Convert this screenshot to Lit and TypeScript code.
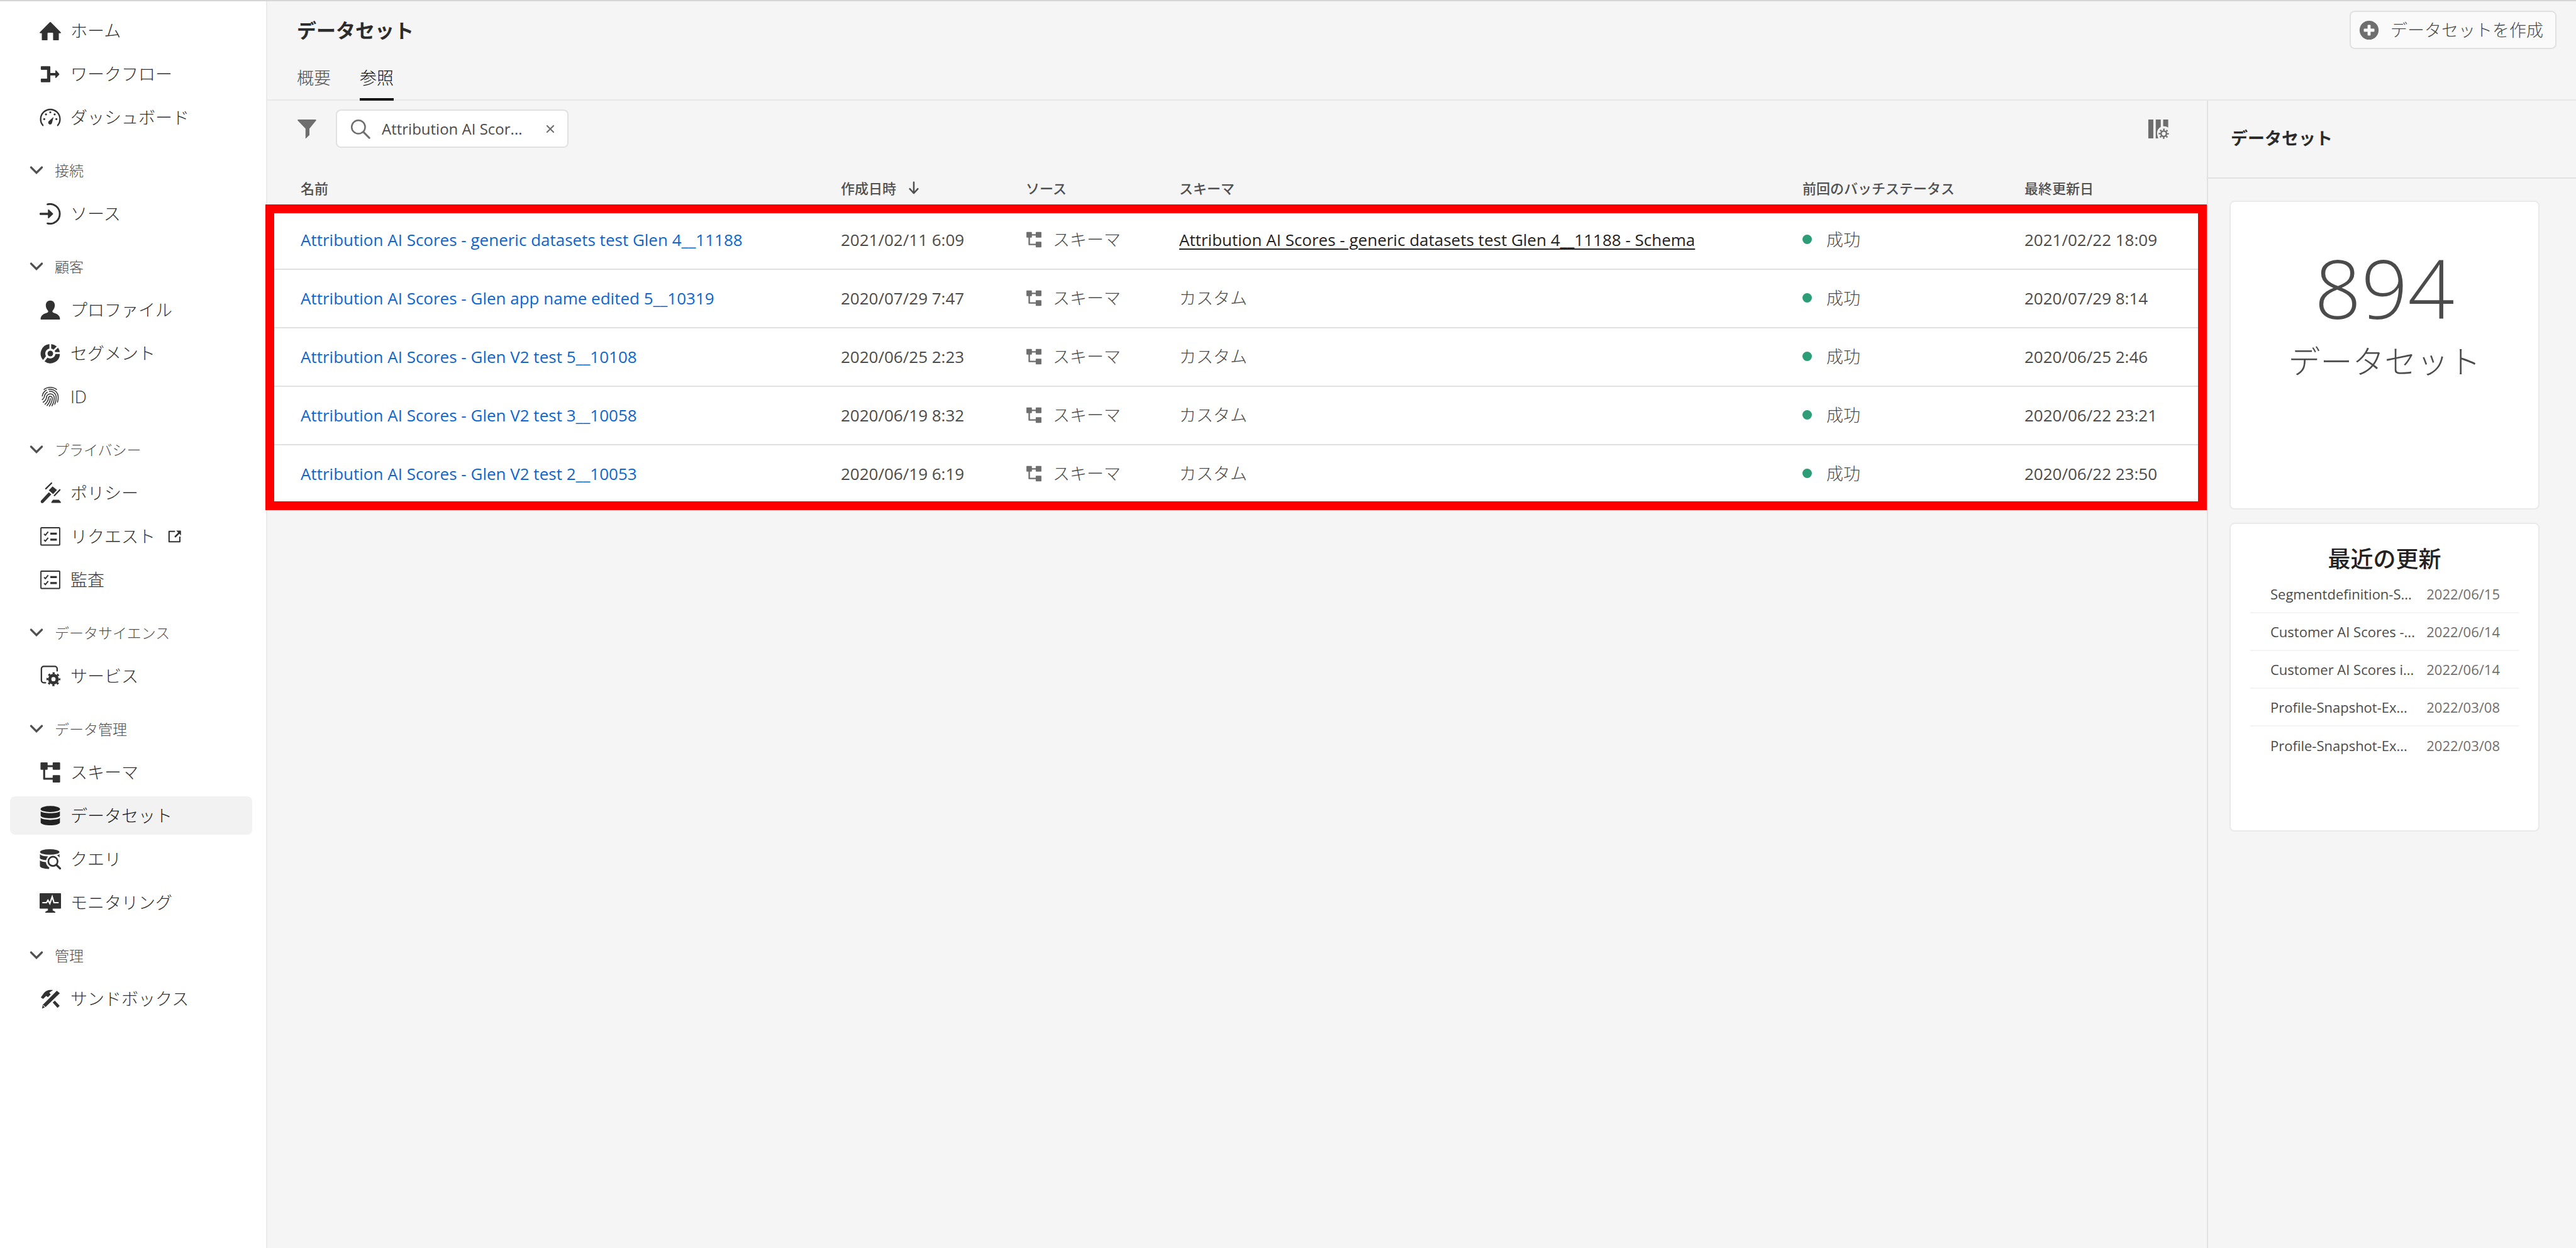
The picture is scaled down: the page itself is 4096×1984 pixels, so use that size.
import { LitElement, html, css, svg, nothing, type SVGTemplateResult } from "lit";
import { customElement, state } from "lit/decorators.js";
import { classMap } from "lit/directives/class-map.js";

/* Icon artwork, drawn on a 36-unit square. */
const ICONS: Record<string, SVGTemplateResult> = {
  home: svg`<path d="M17.2 3.5a1.2 1.2 0 0 1 1.6 0L35.6 20.400c.6.6.2 1.600-.7 1.600H32.300V33c0 .6-.4 1-1 1H23.700c-.6 0-1-.4-1-1V22.300c0-.6-.4-1-1-1h-7.400c-.6 0-1 .4-1 1V33c0 .6-.4 1-1 1H4.700c-.6 0-1-.4-1-1V22H1.100c-.9 0-1.300-1-.7-1.600z"/>`,
  workflow: svg`<path d="M3 4.500h14c.6 0 1 .4 1 1V16h8.500v-3.600c0-.8.8-1.200 1.400-.7l5 5.400c.4.500.4 1.100 0 1.600l-5 5.500c-.6.5-1.400.1-1.400-.7V20H18v10.500c0 .6-.4 1-1 1H3c-.6 0-1-.4-1-1V26.500c0-.6.4-1 1-1h9.500v-15H3c-.6 0-1-.4-1-1v-4c0-.6.4-1 1-1z"/>`,
  dashboard: svg`<path d="M5.500 31A16.300 16.300 0 1 1 30.500 31" fill="none" stroke="currentColor" stroke-width="2.400" stroke-linecap="round"/><path d="M23.500 17 21 26.300a3.300 3.300 0 1 1-5.200-2.800z"/><circle cx="18" cy="9" r="1.700"/><circle cx="10.700" cy="12.500" r="1.700"/><circle cx="25.300" cy="12.500" r="1.700"/><circle cx="7.800" cy="20.500" r="1.700"/><circle cx="28.200" cy="20.500" r="1.700"/>`,
  source: svg`<path d="M13.300 1.900A16.600 16.600 0 1 1 13.300 34.100" fill="none" stroke="currentColor" stroke-width="3" stroke-linecap="round"/><path d="M1.500 16.200H14v-4.800c0-.8.800-1.200 1.400-.7l7 6.500c.4.500.4 1.100 0 1.600l-7 6.500c-.6.5-1.400.1-1.400-.7v-4.800H1.500a1.500 1.500 0 0 1 0-3.600z"/>`,
  profile: svg`<path d="M18 1.800c4.400 0 7.600 3.200 7.600 8.100 0 3.900-1.700 7-3.500 8.900-.7.800-.7 1.200-.4 2.100.3 1 1.300 1.500 2.700 1.900C30.600 24.600 34.300 28 34.300 33c0 .6-.3 1-1 1H2.700c-.7 0-1-.4-1-1 0-5 3.700-8.400 9.900-10.200 1.400-.4 2.400-.9 2.700-1.900.3-.9.300-1.300-.4-2.100-1.800-1.900-3.500-5-3.500-8.900C10.400 5 13.600 1.800 18 1.800z"/>`,
  segment: svg`<path d="M16.500 2v7.800a8.500 8.500 0 0 0-5.800 12.700L5.800 28.800A16.200 16.200 0 0 1 16.500 2zM19.500 2a16 16 0 0 1 9.300 4l-5.500 5.600a8.600 8.600 0 0 0-3.800-1.800zM31 8.300a16 16 0 0 1 3 7.200h-7.800a8.600 8.600 0 0 0-.9-2zM34.200 18.700A16.200 16.200 0 0 1 8.300 31.200l5-6.300A8.500 8.500 0 0 0 26.500 18.700z"/><circle cx="18" cy="18" r="4.700"/>`,
  identity: svg`<g fill="none" stroke="currentColor" stroke-width="1.600" stroke-linecap="round"><path d="M7.500 5.500a17 17 0 0 1 21 0"/><path d="M4.500 16.500a13.500 13.500 0 0 1 7-10M15 5.300a13.500 13.500 0 0 1 16.300 13c.1 3-.4 6-1.200 8.500"/><path d="M4.500 22.500c2.500-1.500 3.300-3 3.500-5a10 10 0 0 1 5-7.500M16.500 8.600a10 10 0 0 1 11.300 9.400c.4 4.500-.6 8.500-2.300 12.500"/><path d="M6 27c3.700-2.500 5.200-4.800 5.500-8a6.600 6.600 0 0 1 13-1c.6 5.500-1.200 10.500-3.700 15"/><path d="M9 30.500c4-3.500 5.500-7 6-10.700a3.200 3.200 0 0 1 6.200-.8c.8 5-1.500 9.500-4.700 14.500"/><path d="M18 21c-.3 4-2.500 8-5.500 11.500"/></g>`,
  policy: svg`<path d="m21.800 6.500 7.400 6.300-6.500 6.700-7.300-6.200z"/><path d="M10.500 10.500 20 1M25 22l9-9.500" fill="none" stroke="currentColor" stroke-width="2.400" stroke-linecap="round"/><path d="M15.500 16.300l4.200 3.700L6.500 34c-2.700 2.300-6.300-.7-3.800-3.800z"/><path d="M22.500 29h10l3 3.500c.5 1 .5 2-.5 2H20.500c-1 0-1-1-.5-2z"/>`,
  checklist: svg`<path d="M3 3.200h30a.8.800 0 0 1 .8.800v27.500a.8.800 0 0 1-.8.800H3a.8.800 0 0 1-.8-.8V4a.8.800 0 0 1 .8-.8z" fill="none" stroke="currentColor" stroke-width="2"/><path d="m7.500 13.500 2.200 2.200 4.700-5.700M7.500 23.500l2.200 2.200 4.700-5.700" fill="none" stroke="currentColor" stroke-width="2.100"/><path d="M18 11.500h11v3.300H18zM18 21.500h11v3.300H18z"/>`,
  service: svg`<path d="M28.500 10V6.500a4 4 0 0 0-4-4H6a4 4 0 0 0-4 4V26a4 4 0 0 0 4 4h3" transform="translate(1 -1)" fill="none" stroke="currentColor" stroke-width="2.400" stroke-linecap="round"/><circle cx="23.300" cy="23" r="6.300" fill="none" stroke="currentColor" stroke-width="5.400"/><circle cx="23.300" cy="23" r="10.200" fill="none" stroke="currentColor" stroke-width="3" stroke-dasharray="3.600 4.410" stroke-dashoffset="1.800"/>`,
  schema: svg`<path d="M2.500 1h10c.6 0 1 .4 1 1v3.800h8.500V2c0-.6.400-1 1-1h10.500c.6 0 1 .4 1 1v10.500c0 .6-.4 1-1 1H23c-.6 0-1-.4-1-1V9h-8.500v3.500c0 .6-.4 1-1 1H9.300V27H22v-3.500c0-.6.4-1 1-1h10.500c.6 0 1 .4 1 1V34c0 .6-.4 1-1 1H23c-.6 0-1-.4-1-1v-3.800H7c-.6 0-1-.4-1-1V13.500H2.500c-.6 0-1-.4-1-1V2c0-.6.400-1 1-1z"/>`,
  dataset: svg`<ellipse cx="18" cy="6.500" rx="16.300" ry="5.200"/><path d="M1.800 10.300c3.500 4.200 28.900 4.200 32.400 0v7.400c-1.500 5.600-30.900 5.600-32.400 0z"/><path d="M1.800 21.300c3.500 4.600 28.900 4.600 32.400 0v8.200c-1.500 6-30.900 6-32.400 0z"/>`,
  query: svg`<ellipse cx="17" cy="5.700" rx="16.300" ry="4.700"/><path d="M.5 9.500c3 2.800 8 3.700 13.800 3.800a12 12 0 0 0-3.400 6.200C5.600 19 1.400 17.800.5 16.300zM.5 20c2.400 1.600 6 2.500 10.100 2.800.3 4 2.400 7.300 5.900 9.200 l-1 2.300C7 34.300 1.200 32.500.5 29.500zM29 11.200c1.800-.4 3.300-1 4.500-1.800v6c-1.200-1.700-2.700-3.200-4.500-4.200z"/><circle cx="22.500" cy="21.500" r="7.800" fill="none" stroke="currentColor" stroke-width="2.800"/><path d="m28.200 27.300 6.200 6.200" fill="none" stroke="currentColor" stroke-width="3.400" stroke-linecap="round"/>`,
  monitor: svg`<path fill-rule="evenodd" d="M1 2h34c.6 0 1 .4 1 1v24c0 .6-.4 1-1 1H22v3l4 2c.7.4.7 2-.3 2H10.300c-1 0-1-1.600-.3-2l4-2v-3H1c-.6 0-1-.4-1-1V3c0-.6.4-1 1-1z"/><path d="M4.500 18h7l2.500-4 3.200 5.500 4-11.500 3 10H32" fill="none" class="knockout" stroke-width="2.300"/>`,
  sandbox: svg`<path d="M29 4.200l5 4.300L10.200 31.600 4 34.300l1.200-6.200z"/><path d="M2 15.500l5.200-7.300C11 3.500 16 2 22.500 3.200l-6.200 4.300 2.400 3.200-4.800 4.500-2.700-2.200-5.200 5z"/><path d="m23.800 22.500 8.200 8.800" fill="none" stroke="currentColor" stroke-width="5"/><path d="M5.800 28.800l3.800 3.400" class="knockout" stroke-width="1.200"/>`,
  external: svg`<path d="M18.500 4.500H3v27h28V18" fill="none" stroke="currentColor" stroke-width="3.400" stroke-linejoin="round"/><path d="M21.500 2.500H33c.6 0 1 .4 1 1V15l-4.300-4.300-10 10-3-3 10-10z"/>`,
  chevron: svg`<path d="m4 10 14 14L32 10" fill="none" stroke="currentColor" stroke-width="5.600" stroke-linecap="round"/>`,
  filter: svg`<path d="M2.500 1h31c1 0 1.500 1.200.8 2L22.500 17.500V29l-6.200 6c-.4.3-.8 0-.8-.4V17.500L1.700 3c-.7-.8-.2-2 .8-2z"/>`,
  search: svg`<circle cx="14.500" cy="14.500" r="12" fill="none" stroke="currentColor" stroke-width="2.800"/><path d="M23.500 23.500 34 34" fill="none" stroke="currentColor" stroke-width="3.400" stroke-linecap="round"/>`,
  close: svg`<path d="M5 5l26 26M31 5 5 31" fill="none" stroke="currentColor" stroke-width="5.400" stroke-linecap="round"/>`,
  columns: svg`<path d="M1 2h8.500v32H1zM13.500 2H22v12.500a12 12 0 0 0-6.200 10.500c0 3 .7 5.500 2 9H13.500zM26 2h8.500v13.500A12 12 0 0 0 26 13.500z"/><circle cx="27" cy="26" r="4.600" fill="none" stroke="currentColor" stroke-width="2.600"/><circle cx="27" cy="26" r="7.200" fill="none" stroke="currentColor" stroke-width="2.800" stroke-dasharray="2.600 3.055" stroke-dashoffset="1.300"/>`,
  add: svg`<path fill-rule="evenodd" d="M18 1a17 17 0 1 1 0 34 17 17 0 0 1 0-34zM16.300 8.500c-.6 0-1 .4-1 1v5.800H9.500c-.6 0-1 .4-1 1v3.400c0 .6.4 1 1 1h5.800v5.800c0 .6.400 1 1 1h3.400c.6 0 1-.4 1-1v-5.800h5.800c.6 0 1-.4 1-1v-3.400c0-.6-.4-1-1-1h-5.800V9.500c0-.6-.4-1-1-1z"/>`,
  down: svg`<path d="M18 3v28M7.500 20 18 31.500 28.500 20" fill="none" stroke="currentColor" stroke-width="4.200" stroke-linecap="round" stroke-linejoin="round"/>`,
};

const icon = (name: string, size = "") =>
  html`<svg class="icon ${size}" viewBox="0 0 36 36" fill="currentColor" aria-hidden="true">${ICONS[name]}</svg>`;

interface NavItem {
  label: string;
  icon: string;
  external?: boolean;
}
interface NavGroup {
  title?: string;
  items: NavItem[];
}

const NAV: NavGroup[] = [
  {
    items: [
      { label: "ホーム", icon: "home" },
      { label: "ワークフロー", icon: "workflow" },
      { label: "ダッシュボード", icon: "dashboard" },
    ],
  },
  { title: "接続", items: [{ label: "ソース", icon: "source" }] },
  {
    title: "顧客",
    items: [
      { label: "プロファイル", icon: "profile" },
      { label: "セグメント", icon: "segment" },
      { label: "ID", icon: "identity" },
    ],
  },
  {
    title: "プライバシー",
    items: [
      { label: "ポリシー", icon: "policy" },
      { label: "リクエスト", icon: "checklist", external: true },
      { label: "監査", icon: "checklist" },
    ],
  },
  { title: "データサイエンス", items: [{ label: "サービス", icon: "service" }] },
  {
    title: "データ管理",
    items: [
      { label: "スキーマ", icon: "schema" },
      { label: "データセット", icon: "dataset" },
      { label: "クエリ", icon: "query" },
      { label: "モニタリング", icon: "monitor" },
    ],
  },
  { title: "管理", items: [{ label: "サンドボックス", icon: "sandbox" }] },
];

interface Dataset {
  name: string;
  created: string;
  schema?: string;
  updated: string;
}

const DATASETS: Dataset[] = [
  {
    name: "Attribution AI Scores - generic datasets test Glen 4__11188",
    created: "2021/02/11 6:09",
    schema: "Attribution AI Scores - generic datasets test Glen 4__11188 - Schema",
    updated: "2021/02/22 18:09",
  },
  { name: "Attribution AI Scores - Glen app name edited 5__10319", created: "2020/07/29 7:47", updated: "2020/07/29 8:14" },
  { name: "Attribution AI Scores - Glen V2 test 5__10108", created: "2020/06/25 2:23", updated: "2020/06/25 2:46" },
  { name: "Attribution AI Scores - Glen V2 test 3__10058", created: "2020/06/19 8:32", updated: "2020/06/22 23:21" },
  { name: "Attribution AI Scores - Glen V2 test 2__10053", created: "2020/06/19 6:19", updated: "2020/06/22 23:50" },
];

const RECENT = [
  { name: "Segmentdefinition-S...", date: "2022/06/15" },
  { name: "Customer AI Scores -...", date: "2022/06/14" },
  { name: "Customer AI Scores i...", date: "2022/06/14" },
  { name: "Profile-Snapshot-Ex...", date: "2022/03/08" },
  { name: "Profile-Snapshot-Ex...", date: "2022/03/08" },
];

@customElement("app-root")
export class AppRoot extends LitElement {
  @state() private current = "データセット";
  @state() private tab = "参照";

  static styles = css`
    :host {
      display: block;
      font-family: "Open Sans", "Noto Sans CJK JP", sans-serif;
      font-size: 27px;
      line-height: 40px;
      font-weight: 300;
      color: #4b4b4b;
      background: #f5f5f5;
    }
    * {
      box-sizing: border-box;
    }
    button,
    input {
      font: inherit;
      color: inherit;
      border: 0;
      padding: 0;
      margin: 0;
      background: none;
    }
    a {
      color: inherit;
      text-decoration: none;
    }
    ul,
    h1,
    h2,
    p {
      margin: 0;
      padding: 0;
      list-style: none;
    }
    .icon {
      width: 34px;
      height: 34px;
      flex: none;
      display: block;
    }
    .icon.mid {
      width: 32px;
      height: 32px;
    }
    .icon.small {
      width: 26px;
      height: 26px;
    }
    .icon.tiny {
      width: 22px;
      height: 22px;
    }
    .icon.mini {
      width: 14px;
      height: 14px;
    }
    .knockout {
      stroke: #fff;
    }
    .shell {
      min-height: 100vh;
      display: grid;
      grid-template-columns: 425px minmax(0, 1fr);
      border-top: 2px solid #d5d5d5;
    }

    /* Sidebar */
    .sidebar {
      background: #fff;
      border-right: 2px solid #eaeaea;
      padding: 16px 22px 16px 16px;
    }
    .nav-list {
      display: grid;
      gap: 8px;
    }
    .nav-item {
      display: flex;
      align-items: center;
      gap: 15px;
      height: 61px;
      padding-left: 47px;
      border-radius: 8px;
      color: #323232;
    }
    .nav-item.current {
      background: #f2f2f2;
      color: #222;
    }
    .nav-label {
      margin-right: 5px;
    }
    .nav-group {
      display: flex;
      align-items: center;
      gap: 18px;
      width: 100%;
      height: 40px;
      margin: 34px 0 18px;
      padding-left: 31px;
      font-size: 23px;
      color: #505050;
    }

    /* Header */
    .main {
      display: flex;
      flex-direction: column;
    }
    .header {
      padding: 15px 31px 0 47px;
      border-bottom: 2px solid #e8e8e8;
    }
    .title-row {
      display: flex;
      justify-content: space-between;
      align-items: center;
    }
    .title {
      font-size: 31px;
      font-weight: 700;
      color: #2c2c2c;
    }
    .create {
      display: flex;
      align-items: center;
      gap: 18px;
      height: 61px;
      padding: 0 19px 0 13px;
      border: 2px solid #e1e1e1;
      border-radius: 8px;
      background: #fafafa;
    }
    .create .icon {
      color: #6e6e6e;
    }
    .tabs {
      display: flex;
      gap: 46px;
      padding-top: 26px;
      margin-bottom: -2px;
    }
    .tab {
      padding-bottom: 12px;
      border-bottom: 4px solid transparent;
      color: #505050;
    }
    .tab.active {
      color: #111;
      border-color: #111;
    }

    /* Body */
    .body {
      flex: 1;
      display: grid;
      grid-template-columns: minmax(0, 1fr) 587px;
    }
    .toolbar {
      display: flex;
      align-items: center;
      gap: 30px;
      padding: 14px 60px 31px 47px;
      color: #6e6e6e;
    }
    .toolbar .columns {
      margin-left: auto;
    }
    .search {
      display: flex;
      align-items: center;
      gap: 18px;
      width: 370px;
      height: 61px;
      padding: 0 20px 0 21px;
      border: 2px solid #e1e1e1;
      border-radius: 8px;
      background: #fff;
    }
    .search-input {
      flex: 1;
      min-width: 0;
      font-size: 24px;
      font-weight: 400;
      color: #4b4b4b;
      outline: none;
    }

    .table-wrap {
      position: relative;
    }
    .highlight {
      position: absolute;
      top: 59px;
      right: 0;
      bottom: -10px;
      left: -3px;
      border: 14px solid #f00;
      pointer-events: none;
    }
    .table {
      width: 100%;
      table-layout: fixed;
      border-collapse: separate;
      border-spacing: 0;
    }
    .col-name {
      width: 881px;
    }
    .col-created {
      width: 294px;
    }
    .col-source {
      width: 244px;
    }
    .col-status {
      width: 353px;
    }
    .col-updated {
      width: 321px;
    }
    .th {
      height: 70px;
      padding: 0 0 4px 31px;
      text-align: left;
      font-size: 22px;
      font-weight: 500;
      color: #505050;
      white-space: nowrap;
    }
    .td {
      height: 93px;
      padding: 0 0 2px 31px;
      background: #fff;
      border-bottom: 2px solid #e1e1e1;
      white-space: nowrap;
    }
    .th:first-child,
    .td:first-child {
      padding-left: 53px;
    }
    .latin {
      font-size: 26px;
      font-weight: 400;
    }
    .inline {
      display: flex;
      align-items: center;
      gap: 17px;
    }
    .inline .icon {
      color: #6e6e6e;
    }
    .sort {
      display: flex;
      align-items: center;
      gap: 17px;
      font-weight: 500;
    }
    .link {
      color: #0d66d0;
    }
    .schema-link {
      color: #222;
      text-decoration: underline;
      text-decoration-thickness: 2px;
      text-underline-offset: 4px;
    }
    .dot {
      width: 15px;
      height: 15px;
      margin-right: 6px;
      border-radius: 50%;
      background: #2d9d78;
    }

    /* Right rail */
    .rail {
      border-left: 2px solid #e1e1e1;
    }
    .rail-title {
      height: 124px;
      padding: 40px 36px;
      border-bottom: 2px solid #e1e1e1;
      font-size: 27px;
      font-weight: 700;
      color: #2c2c2c;
    }
    .cards {
      display: grid;
      gap: 21px;
      padding: 35px 58px 36px 34px;
    }
    .card {
      min-height: 491px;
      border: 2px solid #eaeaea;
      border-radius: 8px;
      background: #fff;
      text-align: center;
    }
    .count {
      padding-top: 50px;
      font-size: 130px;
      line-height: 172px;
    }
    .count-label {
      font-size: 51px;
      line-height: 62px;
    }
    .card-title {
      padding-top: 30px;
      font-size: 36px;
      line-height: 52px;
      font-weight: 500;
      color: #222;
    }
    .recent {
      margin: 0 31px;
    }
    .recent-item {
      display: flex;
      justify-content: space-between;
      align-items: center;
      height: 60px;
      padding: 0 30px 0 32px;
      border-bottom: 2px solid #f4f4f4;
      font-size: 22px;
      font-weight: 400;
    }
    .recent-item:last-child {
      border-bottom: 0;
    }
    .recent-date {
      color: #6e6e6e;
    }
  `;

  private select(event: Event, label: string) {
    event.preventDefault();
    this.current = label;
  }

  private renderNav() {
    return html`
      <nav class="sidebar">
        ${NAV.map(
          (group) => html`
            ${group.title
              ? html`<button class="nav-group" type="button" aria-expanded="true">${icon("chevron", "tiny")}${group.title}</button>`
              : nothing}
            <ul class="nav-list">
              ${group.items.map(
                (item) => html`<li>
                  <a
                    class=${classMap({ "nav-item": true, current: item.label === this.current })}
                    href="#"
                    @click=${(e: Event) => this.select(e, item.label)}
                  >
                    ${icon(item.icon)}<span class="nav-label">${item.label}</span>${item.external ? icon("external", "tiny") : nothing}
                  </a>
                </li>`,
              )}
            </ul>
          `,
        )}
      </nav>
    `;
  }

  private renderRow(row: Dataset) {
    return html`<tr>
      <td class="td latin"><a class="link" href="#">${row.name}</a></td>
      <td class="td latin">${row.created}</td>
      <td class="td"><div class="inline">${icon("schema", "small")}スキーマ</div></td>
      <td class=${classMap({ td: true, latin: !!row.schema })}>
        ${row.schema ? html`<a class="schema-link" href="#">${row.schema}</a>` : "カスタム"}
      </td>
      <td class="td"><div class="inline"><span class="dot"></span>成功</div></td>
      <td class="td latin">${row.updated}</td>
    </tr>`;
  }

  render() {
    return html`
      <div class="shell">
        ${this.renderNav()}
        <main class="main">
          <header class="header">
            <div class="title-row">
              <h1 class="title">データセット</h1>
              <button class="create" type="button">${icon("add", "mid")}データセットを作成</button>
            </div>
            <div class="tabs" role="tablist">
              ${["概要", "参照"].map(
                (name) => html`<button
                  class=${classMap({ tab: true, active: name === this.tab })}
                  type="button"
                  role="tab"
                  aria-selected=${name === this.tab}
                  @click=${() => (this.tab = name)}
                >${name}</button>`,
              )}
            </div>
          </header>
          <div class="body">
            <section>
              <div class="toolbar">
                <button type="button" aria-label="フィルター">${icon("filter", "mid")}</button>
                <label class="search">
                  ${icon("search", "mid")}
                  <input class="search-input" type="text" aria-label="検索" .value=${"Attribution AI Scor..."} />
                  <button type="button" aria-label="クリア">${icon("close", "mini")}</button>
                </label>
                <button class="columns" type="button" aria-label="列の設定">${icon("columns")}</button>
              </div>
              <div class="table-wrap">
                <table class="table">
                  <colgroup>
                    <col class="col-name" />
                    <col class="col-created" />
                    <col class="col-source" />
                    <col />
                    <col class="col-status" />
                    <col class="col-updated" />
                  </colgroup>
                  <thead>
                    <tr>
                      <th class="th">名前</th>
                      <th class="th"><button class="sort" type="button">作成日時${icon("down", "tiny")}</button></th>
                      <th class="th">ソース</th>
                      <th class="th">スキーマ</th>
                      <th class="th">前回のバッチステータス</th>
                      <th class="th">最終更新日</th>
                    </tr>
                  </thead>
                  <tbody>
                    ${DATASETS.map((row) => this.renderRow(row))}
                  </tbody>
                </table>
                <div class="highlight"></div>
              </div>
            </section>
            <aside class="rail">
              <h2 class="rail-title">データセット</h2>
              <div class="cards">
                <div class="card">
                  <p class="count">894</p>
                  <p class="count-label">データセット</p>
                </div>
                <div class="card">
                  <h2 class="card-title">最近の更新</h2>
                  <ul class="recent">
                    ${RECENT.map(
                      (item) => html`<li class="recent-item">
                        <span>${item.name}</span><span class="recent-date">${item.date}</span>
                      </li>`,
                    )}
                  </ul>
                </div>
              </div>
            </aside>
          </div>
        </main>
      </div>
    `;
  }
}
